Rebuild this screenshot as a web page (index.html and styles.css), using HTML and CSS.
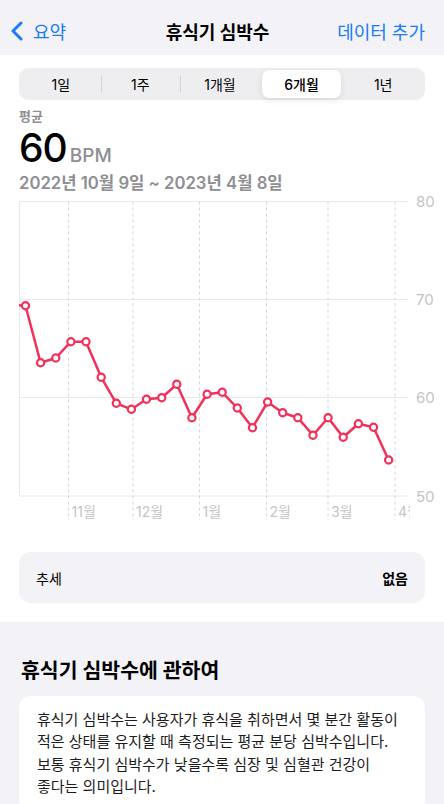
FILE: index.html
```html
<!DOCTYPE html>
<html lang="ko">

<head>
    <meta charset="UTF-8" />
    <meta name="viewport" content="width=device-width, initial-scale=1.0" />
    <title>휴식기 심박수</title>
    <link rel="stylesheet" href="styles.css">
</head>

<body>
    <header class="nav">
        <a class="nav-back" href="#">
            <svg class="chevron" width="14" height="20" viewBox="0 0 14 20">
                <path d="M11 2 L3 10 L11 18" />
            </svg>
            <span>요약</span>
        </a>
        <h1 class="nav-title">휴식기 심박수</h1>
        <a class="nav-action" href="#">데이터 추가</a>
    </header>

    <main class="detail">
        <div class="segments">
            <button type="button" class="segment">1일</button>
            <button type="button" class="segment sep">1주</button>
            <button type="button" class="segment sep">1개월</button>
            <button type="button" class="segment active">6개월</button>
            <button type="button" class="segment">1년</button>
        </div>

        <div class="summary">
            <div class="summary-label">평균</div>
            <div class="summary-value"><span class="value-num">60</span><span class="value-unit">BPM</span></div>
            <div class="summary-range">2022년 10월 9일 ~ 2023년 4월 8일</div>
        </div>

        <svg class="chart" width="425" height="330" viewBox="19 195 425 330">
            <defs>
                <clipPath id="plot">
                    <rect x="19" y="195" width="391" height="330" />
                </clipPath>
            </defs>
            <g class="grid">
                <line x1="19" y1="201.5" x2="408" y2="201.5" />
                <line x1="19" y1="299.5" x2="408" y2="299.5" />
                <line x1="19" y1="397.5" x2="408" y2="397.5" />
                <line x1="19" y1="496" x2="408" y2="496" />
                <line x1="19.5" y1="201.5" x2="19.5" y2="496" />
            </g>
            <g class="grid-dash">
                <line x1="68.5" y1="201.5" x2="68.5" y2="520" />
                <line x1="133" y1="201.5" x2="133" y2="520" />
                <line x1="199.5" y1="201.5" x2="199.5" y2="520" />
                <line x1="266.5" y1="201.5" x2="266.5" y2="520" />
                <line x1="328" y1="201.5" x2="328" y2="520" />
                <line x1="395" y1="201.5" x2="395" y2="520" />
            </g>
            <g class="axis-y">
                <text x="416" y="207">80</text>
                <text x="416" y="305">70</text>
                <text x="416" y="403">60</text>
                <text x="416" y="501.5">50</text>
            </g>
            <g class="axis-x" clip-path="url(#plot)">
                <text x="71.5" y="516.5">11월</text>
                <text x="136" y="516.5">12월</text>
                <text x="202.5" y="516.5">1월</text>
                <text x="269.5" y="516.5">2월</text>
                <text x="331" y="516.5">3월</text>
                <text x="398" y="516.5">4월</text>
            </g>
            <g clip-path="url(#plot)">
                <polyline class="series" points="8,304.5 25.5,305.7 40.6,362.7 55.8,358 70.9,341.7 86,341.7 101.2,377.3 116.3,403.3 131.4,409.3 146.5,399.3 161.7,397.7 176.8,384.3 191.9,417.7 207.1,394.3 222.2,392.3 237.3,408 252.5,427.7 267.6,402 282.7,412.7 297.8,417.7 313,435.3 328.1,417.7 343.2,437.3 358.4,423.7 373.5,427.3 388.6,460" />
            </g>
            <g class="dots">
                <circle cx="25.5" cy="305.7" r="3.6" />
                <circle cx="40.6" cy="362.7" r="3.6" />
                <circle cx="55.8" cy="358" r="3.6" />
                <circle cx="70.9" cy="341.7" r="3.6" />
                <circle cx="86" cy="341.7" r="3.6" />
                <circle cx="101.2" cy="377.3" r="3.6" />
                <circle cx="116.3" cy="403.3" r="3.6" />
                <circle cx="131.4" cy="409.3" r="3.6" />
                <circle cx="146.5" cy="399.3" r="3.6" />
                <circle cx="161.7" cy="397.7" r="3.6" />
                <circle cx="176.8" cy="384.3" r="3.6" />
                <circle cx="191.9" cy="417.7" r="3.6" />
                <circle cx="207.1" cy="394.3" r="3.6" />
                <circle cx="222.2" cy="392.3" r="3.6" />
                <circle cx="237.3" cy="408" r="3.6" />
                <circle cx="252.5" cy="427.7" r="3.6" />
                <circle cx="267.6" cy="402" r="3.6" />
                <circle cx="282.7" cy="412.7" r="3.6" />
                <circle cx="297.8" cy="417.7" r="3.6" />
                <circle cx="313" cy="435.3" r="3.6" />
                <circle cx="328.1" cy="417.7" r="3.6" />
                <circle cx="343.2" cy="437.3" r="3.6" />
                <circle cx="358.4" cy="423.7" r="3.6" />
                <circle cx="373.5" cy="427.3" r="3.6" />
                <circle cx="388.6" cy="460" r="3.6" />
            </g>
        </svg>

        <div class="trend-row">
            <span class="trend-label">추세</span>
            <span class="trend-value">없음</span>
        </div>
    </main>

    <section class="about">
        <h2 class="about-title">휴식기 심박수에 관하여</h2>
        <div class="about-card">
            <p>휴식기 심박수는 사용자가 휴식을 취하면서 몇 분간 활동이 적은 상태를 유지할 때 측정되는 평균 분당 심박수입니다. 보통 휴식기 심박수가 낮을수록 심장 및 심혈관 건강이 좋다는 의미입니다.</p>
        </div>
    </section>
</body>

</html>
```

FILE: styles.css
```css
* {
    box-sizing: border-box;
}

body {
    margin: 0;
    width: 444px;
    height: 804px;
    overflow: hidden;
    background: #f2f2f7;
    color: #000;
    font-family: "Inter", "Noto Sans CJK KR", sans-serif;
}

.nav {
    display: grid;
    grid-template-columns: 1fr auto 1fr;
    align-items: center;
    height: 55px;
    padding: 7px 19px 0 10px;
    background: #f2f2f7;
}

.nav-back,
.nav-action {
    color: #1a7cf5;
    text-decoration: none;
    font-size: 18px;
}

.nav-back {
    display: flex;
    align-items: center;
    gap: 9px;
}

.chevron path {
    fill: none;
    stroke: #1a7cf5;
    stroke-width: 3;
    stroke-linecap: round;
    stroke-linejoin: round;
}

.nav-title {
    margin: 0;
    font-size: 18px;
    font-weight: 700;
}

.nav-action {
    justify-self: end;
}

.detail {
    background: #fff;
    padding: 13px 19px 19px;
}

.segments {
    display: flex;
    height: 32px;
    padding: 2px;
    border-radius: 9px;
    background: #eeeef0;
}

.segment {
    position: relative;
    flex: 1;
    border: none;
    border-radius: 7px;
    background: none;
    padding: 0;
    font-family: inherit;
    font-size: 14px;
    color: #000;
}

.segment.sep::before {
    content: "";
    position: absolute;
    left: 0;
    top: 6px;
    bottom: 6px;
    width: 1px;
    background: #d4d4d8;
}

.segment.active {
    margin: 0 2px;
    background: #fff;
    font-weight: 500;
    box-shadow: 0 2px 6px rgba(0, 0, 0, 0.1);
}

.summary {
    padding-top: 8px;
}

.summary-label {
    font-size: 13px;
    line-height: 16px;
    font-weight: 600;
    color: #8e8e93;
}

.summary-value {
    display: flex;
    align-items: baseline;
    height: 42px;
    margin-top: 3px;
}

.value-num {
    font-size: 39px;
    line-height: 42px;
    font-weight: 500;
    letter-spacing: -1px;
}

.value-unit {
    margin-left: 3px;
    font-size: 19px;
    font-weight: 500;
    color: #8e8e93;
}

.summary-range {
    margin-top: 2px;
    font-size: 16.7px;
    line-height: 24px;
    font-weight: 600;
    color: #8e8e93;
}

.chart {
    display: block;
    overflow: visible;
    margin: 0 -19px 0 0;
}

.grid line {
    stroke: #e8e8ec;
    stroke-width: 1;
}

.grid-dash line {
    stroke: #d6d6da;
    stroke-width: 1;
    stroke-dasharray: 3 3;
}

.axis-y text {
    font-size: 15px;
    fill: #c4c4c8;
}

.axis-x text {
    font-size: 14px;
    fill: #c4c4c8;
}

.series {
    fill: none;
    stroke: #f2305a;
    stroke-width: 2.5;
    stroke-linejoin: round;
}

.dots circle {
    fill: #fff;
    stroke: #f2305a;
    stroke-width: 2.2;
}

.trend-row {
    display: flex;
    justify-content: space-between;
    align-items: center;
    height: 51px;
    margin-top: 27px;
    padding: 0 17px;
    border-radius: 12px;
    background: #f2f2f7;
    font-size: 14px;
}

.trend-value {
    font-weight: 600;
}

.about {
    padding: 36px 19px 0;
}

.about-title {
    margin: 0 0 12px 2px;
    font-size: 20.5px;
    line-height: 26px;
    font-weight: 700;
}

.about-card {
    padding: 13px 18px;
    border-radius: 12px;
    background: #fff;
}

.about-card p {
    margin: 0;
    font-size: 15px;
    line-height: 22.3px;
    color: #1c1c1e;
    word-break: keep-all;
}
```
